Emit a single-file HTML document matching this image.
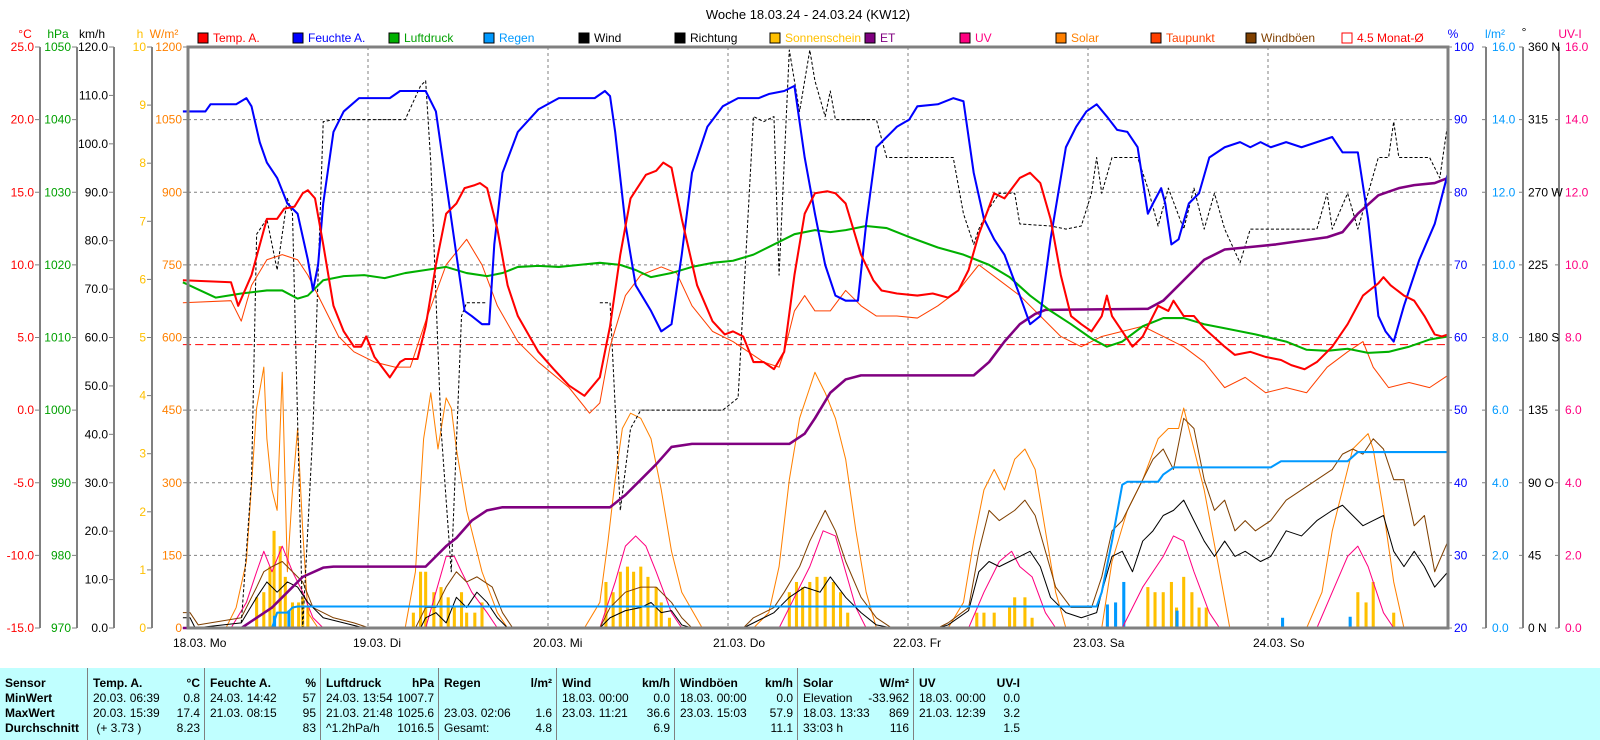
<!DOCTYPE html>
<html><head><meta charset="utf-8"><style>
body{margin:0;width:1600px;height:740px;background:#fff;overflow:hidden;position:relative;font-family:"Liberation Sans",sans-serif}
svg{position:absolute;left:0;top:0}
.tbl{position:absolute;left:0;top:668px;width:1600px;height:72px;background:#c0ffff;font-size:12px}
.col{position:absolute;top:0;height:72px;border-right:1px solid #808080}
.r{position:absolute;left:5px;right:4px;height:15px;line-height:15px}
.r span{position:absolute;right:0}
.b{font-weight:bold}
</style></head><body>
<svg width="1600" height="668" font-family="Liberation Sans, sans-serif" font-size="12">
<text x="808" y="19" text-anchor="middle" font-size="13">Woche 18.03.24 - 24.03.24 (KW12)</text>
<!-- axis headers -->
<g font-size="12">
<text x="25" y="38" text-anchor="middle" fill="#f00">°C</text>
<text x="58" y="38" text-anchor="middle" fill="#00a000">hPa</text>
<text x="92" y="38" text-anchor="middle" fill="#000">km/h</text>
<text x="140" y="38" text-anchor="middle" fill="#ffc000">h</text>
<text x="164" y="38" text-anchor="middle" fill="#ff8000">W/m²</text>
<text x="1453" y="38" text-anchor="middle" fill="#00f">%</text>
<text x="1495" y="38" text-anchor="middle" fill="#0099ff">l/m²</text>
<text x="1524" y="36" text-anchor="middle" fill="#000">°</text>
<text x="1570" y="38" text-anchor="middle" fill="#ff0080">UV-I</text>
</g>
<!-- legend -->
<g font-size="12">
<rect x="198" y="33" width="10" height="10" fill="#f00" stroke="#000"/><text x="213" y="42" fill="#f00">Temp. A.</text>
<rect x="293" y="33" width="10" height="10" fill="#00f" stroke="#000"/><text x="308" y="42" fill="#00f">Feuchte A.</text>
<rect x="389" y="33" width="10" height="10" fill="#00b000" stroke="#000"/><text x="404" y="42" fill="#00a000">Luftdruck</text>
<rect x="484" y="33" width="10" height="10" fill="#0099ff" stroke="#000"/><text x="499" y="42" fill="#0099ff">Regen</text>
<rect x="579" y="33" width="10" height="10" fill="#000" stroke="#000"/><text x="594" y="42">Wind</text>
<rect x="675" y="33" width="10" height="10" fill="#000" stroke="#000"/><text x="690" y="42">Richtung</text>
<rect x="770" y="33" width="10" height="10" fill="#ffc000" stroke="#000"/><text x="785" y="42" fill="#ffc000">Sonnenschein</text>
<rect x="865" y="33" width="10" height="10" fill="#800080" stroke="#000"/><text x="880" y="42" fill="#800080">ET</text>
<rect x="960" y="33" width="10" height="10" fill="#ff0080" stroke="#000"/><text x="975" y="42" fill="#ff0080">UV</text>
<rect x="1056" y="33" width="10" height="10" fill="#ff8000" stroke="#000"/><text x="1071" y="42" fill="#ff8000">Solar</text>
<rect x="1151" y="33" width="10" height="10" fill="#ff4000" stroke="#000"/><text x="1166" y="42" fill="#ff4000">Taupunkt</text>
<rect x="1246" y="33" width="10" height="10" fill="#804000" stroke="#000"/><text x="1261" y="42" fill="#804000">Windböen</text>
<rect x="1342" y="33" width="10" height="10" fill="#fff" stroke="#f00"/><text x="1357" y="42" fill="#f00">4.5 Monat-Ø</text>
</g>
<!-- axis lines -->
<g stroke="#808080" stroke-width="2">
<line x1="40" y1="47" x2="40" y2="628"/><line x1="77" y1="47" x2="77" y2="628"/>
<line x1="114" y1="47" x2="114" y2="628"/><line x1="152" y1="47" x2="152" y2="628"/>
<line x1="1486" y1="47" x2="1486" y2="628"/><line x1="1523" y1="47" x2="1523" y2="628"/>
<line x1="1559" y1="47" x2="1559" y2="628"/>
</g>
<g id="ticks" stroke="#808080" stroke-width="1"></g>
<g id="labels" font-size="12"></g>
<!-- grid -->
<g stroke="#808080" stroke-width="1" stroke-dasharray="3,3">
<line x1="188" y1="119.6" x2="1448" y2="119.6"/><line x1="188" y1="192.3" x2="1448" y2="192.3"/>
<line x1="188" y1="264.9" x2="1448" y2="264.9"/><line x1="188" y1="337.5" x2="1448" y2="337.5"/>
<line x1="188" y1="410.1" x2="1448" y2="410.1"/><line x1="188" y1="482.8" x2="1448" y2="482.8"/>
<line x1="188" y1="555.4" x2="1448" y2="555.4"/>
<line x1="368" y1="47" x2="368" y2="628"/><line x1="548" y1="47" x2="548" y2="628"/>
<line x1="728" y1="47" x2="728" y2="628"/><line x1="908" y1="47" x2="908" y2="628"/>
<line x1="1088" y1="47" x2="1088" y2="628"/><line x1="1268" y1="47" x2="1268" y2="628"/>
</g>
<!-- data -->
<g transform="matrix(1.02439 0 0 1.02289 -4.585 -1.076)" fill="none" stroke-linejoin="round">
<line x1="183" y1="338" x2="1418" y2="338" stroke="#f00" stroke-dasharray="8,4" stroke-width="1"/>
<g fill="#ffc000" stroke="none" id="sun"></g>
<g fill="#0099ff" stroke="none">
<rect x="271" y="603" width="3" height="12"/><rect x="285" y="598" width="3" height="17"/>
<rect x="1084" y="592" width="3" height="23"/><rect x="1092" y="590" width="3" height="25"/>
<rect x="1100" y="570" width="3" height="45"/><rect x="1152" y="598" width="3" height="17"/>
<rect x="1255" y="605" width="3" height="10"/><rect x="1321" y="604" width="3" height="11"/>
</g>
<polyline stroke="#ff8000" stroke-width="1" points="183,615 225,615 235,595 245,550 255,400 262,360 265,430 270,480 275,500 280,365 285,560 290,480 295,420 300,520 305,600 315,615 400,615 410,560 418,430 425,385 432,440 440,390 445,400 450,440 460,500 475,560 490,600 500,615 575,615 590,590 598,530 605,470 612,420 620,405 630,410 640,430 650,480 660,540 670,580 690,615 740,615 755,600 765,555 775,470 785,410 795,380 800,365 810,385 820,410 830,450 840,520 850,580 860,615 930,615 945,590 955,530 965,480 975,460 985,480 995,450 1005,440 1015,460 1025,520 1035,580 1045,615 1080,615 1090,550 1105,500 1120,470 1135,430 1145,420 1155,420 1160,400 1170,440 1180,480 1195,560 1205,615 1280,615 1295,580 1305,520 1315,480 1325,440 1335,430 1340,425 1345,440 1355,500 1365,570 1375,615 1418,615"/>
<polyline stroke="#ff0080" stroke-width="1" points="183,615 230,615 245,590 255,560 262,540 270,560 280,535 290,560 300,580 310,605 320,615 420,615 430,580 440,545 448,545 455,560 465,580 480,600 490,615 590,615 605,570 615,535 625,525 635,535 645,560 660,600 670,615 765,615 780,585 795,555 808,520 820,525 830,560 840,595 850,615 950,615 965,580 980,550 992,540 1000,555 1012,565 1025,600 1035,615 1100,615 1120,575 1140,545 1150,525 1160,530 1170,560 1185,600 1195,615 1290,615 1305,580 1320,545 1330,535 1340,555 1355,600 1365,615 1418,615"/>
<polyline stroke="#804000" stroke-width="1" points="183,600 190,600 198,612 240,605 255,575 262,560 270,555 280,550 290,560 300,570 310,595 330,605 350,610 365,615 410,615 420,595 430,595 440,575 450,560 460,570 470,565 485,575 495,600 505,615 590,615 600,595 615,580 630,575 645,575 660,590 670,605 680,615 730,615 740,605 760,595 770,580 785,555 795,530 810,500 820,520 830,550 845,585 860,605 875,615 920,615 930,610 950,595 960,540 970,500 980,510 995,500 1005,490 1015,505 1025,540 1035,575 1050,595 1070,595 1080,565 1090,520 1100,510 1110,490 1120,470 1130,450 1140,440 1150,460 1160,410 1170,420 1180,470 1190,500 1200,490 1210,520 1220,510 1230,520 1245,510 1260,490 1275,480 1290,470 1305,460 1315,445 1325,440 1335,445 1345,430 1355,440 1365,470 1375,470 1385,515 1395,505 1405,560 1418,530"/>
<polyline stroke="#000" stroke-width="1" points="183,605 190,605 195,615 240,610 255,585 265,570 275,580 285,570 295,575 305,590 320,605 340,610 360,615 415,615 420,605 430,600 440,610 450,585 460,595 470,580 480,590 490,605 500,615 590,615 600,605 615,598 630,595 640,590 650,600 660,598 670,612 680,615 730,615 740,610 760,600 775,585 790,575 805,580 815,565 830,585 845,600 860,612 875,615 920,615 930,612 950,598 960,560 970,550 980,555 990,550 1000,545 1010,540 1020,555 1030,585 1045,600 1060,605 1075,600 1080,580 1090,545 1100,540 1110,560 1120,530 1130,520 1140,505 1150,500 1160,490 1170,510 1180,530 1190,545 1200,530 1210,545 1220,540 1235,550 1245,545 1260,520 1275,525 1290,510 1305,500 1315,495 1325,505 1335,515 1345,510 1355,505 1365,540 1375,555 1385,540 1395,555 1405,575 1418,560"/>
<polyline stroke="#000" stroke-width="1" stroke-dasharray="3,2" points="240,610 250,470 255,230 265,215 270,240 275,265 285,195 290,210 300,615 310,420 320,120 330,118 400,118 415,85 420,80 425,160 435,420 445,560 455,310 460,297 480,297"/>
<polyline stroke="#000" stroke-width="1" stroke-dasharray="3,2" points="590,297 600,297 610,500 620,420 630,402 710,402 725,390 740,115 750,120 760,115 765,270 775,50 780,80 785,110 795,50 800,80 810,115 815,90 820,118 860,118 870,155 935,155 945,210 955,240 960,225 970,205 980,190 995,190 1000,220 1030,222 1045,225 1060,222 1070,190 1075,155 1080,190 1090,155 1115,155 1125,185 1135,222 1145,185 1160,225 1170,185 1180,225 1190,190 1200,225 1215,258 1225,225 1290,225 1300,190 1305,225 1320,190 1330,225 1340,190 1350,155 1360,155 1365,120 1370,155 1400,155 1410,175 1418,120"/>
<polyline stroke="#ff4000" stroke-width="1" points="183,297 230,295 240,315 250,280 265,255 280,250 295,255 305,270 320,300 335,330 350,345 370,355 390,360 405,360 420,315 440,260 460,235 475,260 490,300 510,335 530,355 560,380 580,405 590,395 600,340 615,290 630,270 650,262 665,268 680,300 700,325 720,335 735,345 750,355 765,360 770,345 780,305 790,290 800,305 815,305 830,285 845,300 860,310 880,310 900,312 920,300 940,285 960,260 980,275 1000,290 1020,310 1040,330 1060,340 1080,330 1100,325 1120,320 1140,330 1160,340 1180,355 1200,380 1220,370 1240,385 1260,380 1280,385 1300,360 1320,345 1335,335 1345,360 1360,380 1380,375 1400,380 1418,368"/>
<polyline stroke="#0099ff" stroke-width="2" points="183,615 270,615 275,600 285,600 290,595 295,594 1075,594 1080,580 1090,530 1100,475 1105,472 1135,472 1140,465 1150,458 1245,458 1255,452 1320,452 1330,443 1418,443"/>
<polyline stroke="#800080" stroke-width="2.5" points="183,615 240,615 255,605 270,595 285,580 300,565 320,556 330,555 420,555 430,545 440,535 450,527 465,510 480,500 495,497 600,497 615,485 630,470 645,455 660,438 680,435 775,435 790,425 800,410 815,385 830,372 845,368 955,368 970,355 985,335 1000,318 1015,308 1025,304 1125,303 1140,295 1160,275 1180,255 1200,245 1230,242 1250,240 1300,233 1315,228 1330,210 1350,192 1370,185 1385,182 1405,180 1418,175"/>
<polyline stroke="#00b000" stroke-width="2" points="183,277 200,285 215,292 240,288 265,285 280,285 295,293 305,290 320,275 340,271 360,270 380,273 400,268 420,265 440,262 460,268 480,271 495,268 510,262 530,261 550,262 570,260 590,258 610,260 625,265 640,272 660,268 680,262 700,258 720,256 740,250 760,240 780,230 800,226 815,228 830,226 850,222 870,224 890,232 920,243 945,250 970,260 990,272 1010,290 1030,305 1050,318 1070,332 1085,340 1100,335 1120,320 1140,312 1160,312 1180,318 1200,322 1230,328 1260,335 1280,343 1300,344 1320,342 1340,346 1360,345 1380,340 1400,333 1418,330"/>
<polyline stroke="#0000ff" stroke-width="2" points="183,110 205,110 210,103 235,103 245,97 250,105 258,140 265,160 275,175 285,200 295,210 305,255 310,285 315,260 320,200 330,130 340,110 355,97 385,97 395,90 420,90 430,110 440,180 450,250 458,305 465,310 475,318 482,318 487,240 495,170 510,130 530,108 550,97 585,97 595,90 600,95 605,130 615,220 625,280 640,305 650,325 660,318 670,250 680,170 695,125 710,105 725,97 745,97 755,93 770,90 780,85 790,155 800,210 810,260 820,290 830,295 842,295 850,220 860,145 870,135 880,125 892,118 900,105 920,103 935,97 945,100 955,170 965,215 975,235 985,250 1000,290 1010,318 1020,310 1030,235 1045,145 1055,125 1065,110 1075,103 1085,115 1095,128 1105,130 1115,145 1125,210 1130,200 1138,185 1142,200 1148,240 1155,235 1165,200 1175,190 1185,155 1200,145 1215,140 1225,145 1235,140 1245,145 1260,140 1275,145 1290,140 1305,135 1315,150 1330,150 1340,215 1350,310 1357,325 1365,335 1375,300 1390,255 1405,220 1418,170"/>
<polyline stroke="#ff0000" stroke-width="2" points="183,275 230,277 237,300 250,270 265,215 275,215 282,205 292,203 300,190 305,187 312,195 320,240 330,300 340,325 350,340 357,340 362,330 370,350 385,370 395,355 400,352 412,352 420,320 430,260 440,210 450,200 458,185 468,182 473,180 480,185 490,225 500,280 510,310 530,345 545,362 560,378 575,388 590,370 600,320 610,250 620,195 635,172 645,168 652,160 660,165 670,215 685,280 700,315 712,328 720,325 730,330 740,355 750,355 760,362 770,345 780,270 790,210 800,190 812,188 820,190 830,200 845,250 857,275 865,285 880,288 900,290 915,288 930,292 940,285 950,265 960,230 975,190 985,195 1000,175 1010,170 1020,180 1030,215 1040,270 1050,310 1060,318 1070,325 1080,310 1085,290 1090,310 1100,325 1110,340 1120,330 1135,300 1145,305 1150,295 1160,310 1170,310 1180,322 1200,340 1210,348 1225,345 1240,350 1255,353 1265,358 1278,362 1290,355 1305,340 1320,318 1335,290 1350,278 1355,272 1362,280 1375,290 1385,295 1395,310 1405,328 1412,330 1418,328"/>
</g>
<rect x="188" y="47" width="1260" height="581" fill="none" stroke="#808080" stroke-width="3"/>
<!-- dates -->
<g font-size="12">
<text x="173" y="647">18.03.  Mo</text><text x="353" y="647">19.03.  Di</text>
<text x="533" y="647">20.03.  Mi</text><text x="713" y="647">21.03.  Do</text>
<text x="893" y="647">22.03.  Fr</text><text x="1073" y="647">23.03.  Sa</text>
<text x="1253" y="647">24.03.  So</text>
</g>
</svg>
<div class="tbl">
<div class="col" style="left:0;width:87px"><div class="r b" style="top:8px">Sensor</div><div class="r b" style="top:23px">MinWert</div><div class="r b" style="top:38px">MaxWert</div><div class="r b" style="top:53px">Durchschnitt</div></div>
<div class="col" style="left:88px;width:116px"><div class="r b" style="top:8px">Temp. A.<span>°C</span></div><div class="r" style="top:23px">20.03.  06:39<span>0.8</span></div><div class="r" style="top:38px">20.03.  15:39<span>17.4</span></div><div class="r" style="top:53px">&nbsp;(+ 3.73 )<span>8.23</span></div></div>
<div class="col" style="left:205px;width:115px"><div class="r b" style="top:8px">Feuchte A.<span>%</span></div><div class="r" style="top:23px">24.03.  14:42<span>57</span></div><div class="r" style="top:38px">21.03.  08:15<span>95</span></div><div class="r" style="top:53px"><span>83</span></div></div>
<div class="col" style="left:321px;width:117px"><div class="r b" style="top:8px">Luftdruck<span>hPa</span></div><div class="r" style="top:23px">24.03. 13:54<span>1007.7</span></div><div class="r" style="top:38px">21.03. 21:48<span>1025.6</span></div><div class="r" style="top:53px">^1.2hPa/h<span>1016.5</span></div></div>
<div class="col" style="left:439px;width:117px"><div class="r b" style="top:8px">Regen<span>l/m²</span></div><div class="r" style="top:38px">23.03.  02:06<span>1.6</span></div><div class="r" style="top:53px">Gesamt:<span>4.8</span></div></div>
<div class="col" style="left:557px;width:117px"><div class="r b" style="top:8px">Wind<span>km/h</span></div><div class="r" style="top:23px">18.03.  00:00<span>0.0</span></div><div class="r" style="top:38px">23.03.  11:21<span>36.6</span></div><div class="r" style="top:53px"><span>6.9</span></div></div>
<div class="col" style="left:675px;width:122px"><div class="r b" style="top:8px">Windböen<span>km/h</span></div><div class="r" style="top:23px">18.03.  00:00<span>0.0</span></div><div class="r" style="top:38px">23.03.  15:03<span>57.9</span></div><div class="r" style="top:53px"><span>11.1</span></div></div>
<div class="col" style="left:798px;width:115px"><div class="r b" style="top:8px">Solar<span>W/m²</span></div><div class="r" style="top:23px">Elevation<span>-33.962</span></div><div class="r" style="top:38px">18.03.  13:33<span>869</span></div><div class="r" style="top:53px">33:03 h<span>116</span></div></div>
<div class="col" style="left:914px;width:110px;border-right:none"><div class="r b" style="top:8px">UV<span>UV-I</span></div><div class="r" style="top:23px">18.03.  00:00<span>0.0</span></div><div class="r" style="top:38px">21.03.  12:39<span>3.2</span></div><div class="r" style="top:53px"><span>1.5</span></div></div>
</div>
<script>
(function(){
var NS="http://www.w3.org/2000/svg";
var L=document.getElementById("labels"),T=document.getElementById("ticks");
function t(x,y,s,c,a){var e=document.createElementNS(NS,"text");e.setAttribute("x",x);e.setAttribute("y",y+4);e.setAttribute("fill",c);e.setAttribute("text-anchor",a);e.textContent=s;L.appendChild(e);}
function k(x1,x2,y){var e=document.createElementNS(NS,"line");e.setAttribute("x1",x1);e.setAttribute("x2",x2);e.setAttribute("y1",y);e.setAttribute("y2",y);T.appendChild(e);}
var H=581,top=47;
function ax(n,fn,x,tx1,tx2,c,a){for(var i=0;i<=n;i++){var y=top+H*i/n;t(x,y,fn(i),c,a);k(tx1,tx2,y);}}
ax(8,function(i){return (25-5*i).toFixed(1)},34,35,40,"#f00","end");
ax(8,function(i){return String(1050-10*i)},71,72,77,"#00a000","end");
ax(12,function(i){return (120-10*i).toFixed(1)},108,109,114,"#000","end");
ax(10,function(i){return String(10-i)},146,147,152,"#ffc000","end");
ax(8,function(i){return String(1200-150*i)},182,183,188,"#ff8000","end");
ax(8,function(i){return String(100-10*i)},1454,1448,1452,"#00f","start");
ax(8,function(i){return (16-2*i).toFixed(1)},1492,1482,1486,"#0099ff","start");
var d=["360 N","315","270 W","225","180 S","135","90  O","45","0  N"];
ax(8,function(i){return d[i]},1528,1519,1523,"#000","start");
ax(8,function(i){return (16-2*i).toFixed(1)},1565,1555,1559,"#ff0080","start");
var S=document.getElementById("sun");
var b=[255,585,262,580,268,555,272,520,278,535,283,565,290,590,296,590,300,585,305,595,408,600,415,560,420,560,428,580,435,575,442,585,448,595,455,580,460,600,468,600,475,590,596,570,603,580,610,560,617,555,623,560,630,555,637,565,645,575,650,590,658,605,775,580,782,570,788,575,795,570,802,565,810,565,818,570,825,580,832,600,958,600,965,600,975,600,990,595,995,585,1005,585,1012,605,1125,575,1132,580,1140,580,1148,570,1153,595,1160,565,1168,580,1175,595,1182,595,1330,580,1338,590,1345,570,1365,600];
for(var i=0;i<b.length;i+=2){var r=document.createElementNS(NS,"rect");r.setAttribute("x",b[i]-1.5);r.setAttribute("y",b[i+1]);r.setAttribute("width",3);r.setAttribute("height",615-b[i+1]);S.appendChild(r);}
})();
</script>
</body></html>
